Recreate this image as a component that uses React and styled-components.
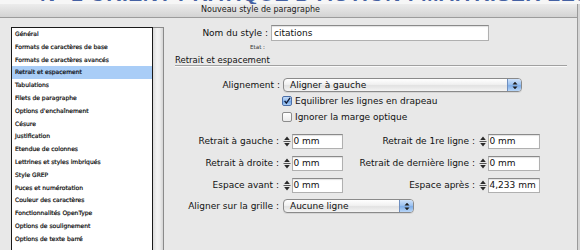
import React from 'react';
import styled, {createGlobalStyle} from 'styled-components';

const FONT = '"DejaVu Sans", Verdana, sans-serif';

const categories = [
	'Général',
	'Formats de caractères de base',
	'Formats de caractères avancés',
	'Retrait et espacement',
	'Tabulations',
	'Filets de paragraphe',
	"Options d'enchaînement",
	'Césure',
	'Justification',
	'Etendue de colonnes',
	'Lettrines et styles imbriqués',
	'Style GREP',
	'Puces et numérotation',
	'Couleur des caractères',
	'Fonctionnalités OpenType',
	'Options de soulignement',
	'Options de texte barré'
];

const spinRows = [
	['Retrait à gauche :', '0 mm', 'Retrait de 1re ligne :', '0 mm'],
	['Retrait à droite :', '0 mm', 'Retrait de dernière ligne :', '0 mm'],
	['Espace avant :', '0 mm', 'Espace après :', '4,233 mm']
];

export default function App () {
	return (
		<>
			<GlobalStyle />
			<StyledScreen>
				<StyledBackdrop>
					<StyledBackdropTitle>N° 1 ORIENT PRATIQUE D’ACTION : MAÎTRISER LES RÈGLES · PARTIE</StyledBackdropTitle>
				</StyledBackdrop>
				<StyledDialog>
					<StyledTitleBar>Nouveau style de paragraphe</StyledTitleBar>
					<StyledBody>
						<StyledCategoryPane>
							<StyledList>
								{categories.map((name) => (
									<StyledItem key={name} selected={name === 'Retrait et espacement'}>{name}</StyledItem>
								))}
							</StyledList>
							<StyledScrollbar />
						</StyledCategoryPane>
						<StyledSettings>
							<StyledNameRow>
								<StyledNameLabel>Nom du style :</StyledNameLabel>
								<StyledNameInput>citations</StyledNameInput>
							</StyledNameRow>
							<StyledStateRow>Etat :</StyledStateRow>
							<StyledSectionHeader>Retrait et espacement</StyledSectionHeader>
							<StyledFormRow top={12.5}>
								<StyledLabel width={105}>Alignement :</StyledLabel>
								<Select width={239}>Aligner à gauche</Select>
							</StyledFormRow>
							<StyledCheckRow top={1}>
								<Checkbox checked />
								<span>Equilibrer les lignes en drapeau</span>
							</StyledCheckRow>
							<StyledCheckRow>
								<Checkbox />
								<span>Ignorer la marge optique</span>
							</StyledCheckRow>
							<StyledSpinGrid>
								{spinRows.map(([l1, v1, l2, v2]) => (
									<React.Fragment key={l1}>
										<StyledLabel>{l1}</StyledLabel>
										<SpinField value={v1} />
										<StyledLabel>{l2}</StyledLabel>
										<SpinField value={v2} />
									</React.Fragment>
								))}
							</StyledSpinGrid>
							<StyledFormRow top={6.5}>
								<StyledLabel width={104} gap={4}>Aligner sur la grille :</StyledLabel>
								<Select width={131}>Aucune ligne</Select>
							</StyledFormRow>
						</StyledSettings>
					</StyledBody>
				</StyledDialog>
			</StyledScreen>
		</>
	);
}

function Select (props) {
	return (
		<StyledSelect width={props.width}>
			<StyledSelectText>{props.children}</StyledSelectText>
			<StyledSelectCap>
				<svg width="6" height="9" viewBox="0 0 6 9">
					<path d="M0.5 3.5 L3 0.8 L5.5 3.5 Z M0.5 5.5 L3 8.2 L5.5 5.5 Z" fill="#1c1c1c" />
				</svg>
			</StyledSelectCap>
		</StyledSelect>
	);
}

function Checkbox (props) {
	return (
		<StyledCheckbox checked={props.checked}>
			{props.checked &&
				<svg width="10" height="10" viewBox="0 0 10 10">
					<path d="M2 4.8 L4.2 7.6 L8.8 1" fill="none" stroke="#101830" strokeWidth="1.6" />
				</svg>
			}
		</StyledCheckbox>
	);
}

function SpinField (props) {
	return (
		<StyledSpinField>
			<StyledStepper>
				<svg width="8" height="13" viewBox="0 0 8 13">
					<path d="M1.2 5 L4 1.6 L6.8 5 Z M1.2 8 L4 11.4 L6.8 8 Z" fill="#2a2a2a" />
					<path d="M0.5 6.5 H7.5" stroke="#555" strokeWidth="1" />
				</svg>
			</StyledStepper>
			<StyledValueInput>{props.value}</StyledValueInput>
		</StyledSpinField>
	);
}

const GlobalStyle = createGlobalStyle`
	body {
		margin: 0;
		background: #d6d6d6;
		font-family: ${FONT};
	}
`;

const StyledScreen = styled.div`
	width: 580px;
	height: 250px;
	overflow: hidden;
	display: flex;
	flex-direction: column;
`;

const StyledBackdrop = styled.div`
	flex: 0 0 4px;
	height: 4px;
	overflow: hidden;
	background: #f6f6f6;
	padding-left: 40px;
`;

const StyledBackdropTitle = styled.div`
	margin-top: -17px;
	font: bold 21px/21px "Liberation Sans", Arial, sans-serif;
	color: #4561a3;
	white-space: nowrap;
	letter-spacing: 0.5px;
`;

const StyledDialog = styled.div`
	flex: 1 1 auto;
	width: 578px;
	box-sizing: border-box;
	border-right: 1px solid #9a9a9a;
	background: #e8e8e8;
	display: flex;
	flex-direction: column;
	min-height: 0;
`;

const StyledTitleBar = styled.div`
	flex: 0 0 auto;
	height: 13px;
	line-height: 11px;
	padding-right: 56px;
	text-align: center;
	font-size: 8px;
	color: #1a1a1a;
	background: linear-gradient(#ececec, #d3d3d3);
	border-bottom: 1px solid #9c9c9c;
`;

const StyledBody = styled.div`
	flex: 1 1 auto;
	display: flex;
	min-height: 0;
`;

const StyledCategoryPane = styled.div`
	flex: 0 0 auto;
	display: flex;
	margin: 9px 0 0 11px;
	height: 240px;
`;

const StyledList = styled.div`
	width: 142px;
	box-sizing: border-box;
	background: #fff;
	border: 1px solid #1a1a1a;
	border-bottom: none;
`;

const StyledItem = styled.div`
	height: 12.8px;
	line-height: 12.8px;
	padding-left: 3px;
	font-size: 6px;
	color: #0a0a0a;
	-webkit-text-stroke: 0.2px #0a0a0a;
	white-space: nowrap;
	background: ${(p) => (p.selected ? '#a9cdf7' : 'transparent')};
`;

const StyledScrollbar = styled.div`
	width: 11px;
	box-sizing: border-box;
	border-top: 1px solid #8a8a8a;
	border-right: 1px solid #8a8a8a;
	background: linear-gradient(to right, #dadada, #f3f3f3 40%, #ececec 70%, #d4d4d4);
`;

const StyledSettings = styled.div`
	flex: 1 1 auto;
	padding: 0 10px 0 11px;
	display: flex;
	flex-direction: column;
	font-size: 9px;
	color: #111;
`;

const StyledNameRow = styled.div`
	display: flex;
	align-items: center;
	gap: 3px;
	margin-top: 7px;
	height: 16px;
`;

const StyledNameLabel = styled.div`
	width: 93px;
	text-align: right;
	white-space: nowrap;
`;

const StyledNameInput = styled.div`
	width: 218px;
	height: 16px;
	box-sizing: border-box;
	padding-left: 2px;
	line-height: 14px;
	background: #fff;
	border: 1px solid #b0b0b0;
	border-top-color: #8a8a8a;
	box-shadow: inset 0 1px 1px rgba(0, 0, 0, 0.12);
`;

const StyledStateRow = styled.div`
	width: 90px;
	margin-top: 3px;
	height: 7px;
	line-height: 7px;
	text-align: right;
	font-size: 5.6px;
	color: #333;
`;

const StyledSectionHeader = styled.div`
	margin-top: 3.5px;
	height: 10px;
	line-height: 10px;
	font-size: 8.5px;
	border-bottom: 1px solid #a0a0a0;
	box-shadow: 0 1px 0 #fafafa;
`;

const StyledFormRow = styled.div`
	display: flex;
	align-items: center;
	margin-top: ${(p) => p.top || 0}px;
	height: 14px;
`;

const StyledLabel = styled.div`
	flex: 0 0 auto;
	width: ${(p) => (p.width ? `${p.width}px` : 'auto')};
	margin-right: ${(p) => (p.gap === undefined ? (p.width ? 3 : 0) : p.gap)}px;
	text-align: right;
	white-space: nowrap;
`;

const StyledSelect = styled.div`
	width: ${(p) => p.width}px;
	height: 14px;
	box-sizing: border-box;
	display: flex;
	border: 1px solid #8a8a8a;
	border-radius: 4px;
	overflow: hidden;
	background: linear-gradient(#ffffff, #f1f1f1 45%, #e2e2e2 55%, #f4f4f4);
	box-shadow: 0 1px 0 rgba(0, 0, 0, 0.08);
`;

const StyledSelectText = styled.div`
	flex: 1 1 auto;
	padding-left: 6px;
	line-height: 12px;
	white-space: nowrap;
`;

const StyledSelectCap = styled.div`
	flex: 0 0 13px;
	display: flex;
	align-items: center;
	justify-content: center;
	border-left: 1px solid #6f8fbf;
	background: linear-gradient(#cfe2fa, #9ec3f0 45%, #7faee9 55%, #b9d6f7);
`;

const StyledCheckRow = styled.div`
	display: flex;
	align-items: center;
	gap: 3px;
	height: 16px;
	margin-top: ${(p) => p.top || 0}px;
	padding-left: 107px;
`;

const StyledCheckbox = styled.div`
	width: 10px;
	height: 10px;
	box-sizing: border-box;
	border: 1px solid ${(p) => (p.checked ? '#4a6ea8' : '#8c8c8c')};
	border-radius: 2px;
	display: flex;
	align-items: center;
	justify-content: center;
	background: ${(p) => (p.checked
		? 'linear-gradient(#c5dcf7, #8db8ee 50%, #6da2e6 51%, #a9cdf5)'
		: 'linear-gradient(#ffffff, #ececec)')};
	svg {
		margin-top: -1px;
	}
`;

const StyledSpinGrid = styled.div`
	display: grid;
	grid-template-columns: 104px 60px 129px 61px;
	grid-auto-rows: 15px;
	column-gap: 3.5px;
	row-gap: 7px;
	align-items: center;
	margin-top: 8.5px;
`;

const StyledSpinField = styled.div`
	display: flex;
	align-items: center;
	gap: 1px;
	height: 15px;
`;

const StyledStepper = styled.div`
	flex: 0 0 8px;
	display: flex;
	align-items: center;
`;

const StyledValueInput = styled.div`
	flex: 1 1 auto;
	height: 15px;
	box-sizing: border-box;
	padding-left: 1px;
	line-height: 13px;
	white-space: nowrap;
	background: #fff;
	border: 1px solid #b0b0b0;
	border-top-color: #8a8a8a;
	box-shadow: inset 0 1px 1px rgba(0, 0, 0, 0.12);
`;
